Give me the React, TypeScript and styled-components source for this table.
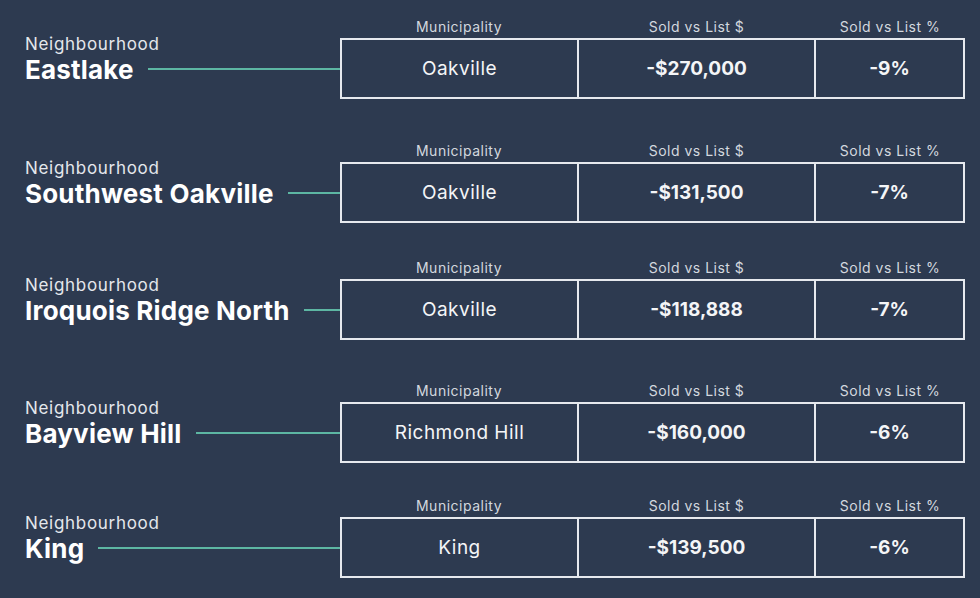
import React from "react";
import styled, { createGlobalStyle } from "styled-components";

const GlobalStyle = createGlobalStyle`
  html, body {
    margin: 0;
    padding: 0;
    background: #2d3a50;
  }
  body {
    font-family: Inter, "Open Sans", sans-serif;
    color: #ffffff;
  }
`;

// page wrapper, fixed to the screenshot size
const Page = styled.div`
  width: 980px;
  height: 598px;
  box-sizing: border-box;
  padding: 0 15px 0 25px;
  display: flex;
  flex-direction: column;
  background: #2d3a50;
  overflow: hidden;
`;

const Row = styled.div<{ $top: number }>`
  display: flex;
  align-items: flex-end;
  margin-top: ${(p) => p.$top}px;
`;

const LabelBlock = styled.div`
  flex: 1;
  display: flex;
  flex-direction: column;
  padding-bottom: 15px;
`;

const Kicker = styled.div`
  font-size: 17px;
  line-height: 20px;
  letter-spacing: 0.7px;
  color: #e4e7ec;
  font-weight: 400;
`;

const NameRow = styled.div`
  display: flex;
  align-items: center;
  height: 30px;
`;

const Name = styled.div`
  font-size: 26px;
  font-weight: 700;
  letter-spacing: 0.2px;
  color: #ffffff;
  white-space: nowrap;
`;

const Connector = styled.div`
  flex: 1;
  height: 2px;
  margin-left: 14px;
  background: #5db6a3;
`;

const TableBlock = styled.div`
  width: 625px;
  display: flex;
  flex-direction: column;
`;

const HeaderRow = styled.div`
  display: grid;
  grid-template-columns: 238px 237px 1fr;
  height: 24px;
  align-items: center;
  text-align: center;
  font-size: 14px;
  letter-spacing: 0.5px;
  color: #d3d8df;
`;

const Table = styled.div`
  display: grid;
  grid-template-columns: 235px 237px 1fr;
  height: 61px;
  box-sizing: border-box;
  border: 2px solid #e6e9ee;
`;

const Cell = styled.div<{ $bold?: boolean; $divider?: boolean }>`
  display: flex;
  align-items: center;
  justify-content: center;
  font-size: 19px;
  font-weight: ${(p) => (p.$bold ? 700 : 400)};
  letter-spacing: ${(p) => (p.$bold ? "0" : "0.5px")};
  color: #f4f5f7;
  border-left: ${(p) => (p.$divider ? "2px solid #e6e9ee" : "none")};
`;

interface Item {
  name: string;
  municipality: string;
  dollars: string;
  percent: string;
  top: number;
}

const items: Item[] = [
  { name: "Eastlake", municipality: "Oakville", dollars: "-$270,000", percent: "-9%", top: 14 },
  { name: "Southwest Oakville", municipality: "Oakville", dollars: "-$131,500", percent: "-7%", top: 39 },
  { name: "Iroquois Ridge North", municipality: "Oakville", dollars: "-$118,888", percent: "-7%", top: 32 },
  { name: "Bayview Hill", municipality: "Richmond Hill", dollars: "-$160,000", percent: "-6%", top: 38 },
  { name: "King", municipality: "King", dollars: "-$139,500", percent: "-6%", top: 30 },
];

const App: React.FC = () => {
  return (
    <>
      <GlobalStyle />
      <Page>
        {items.map((item) => (
          <Row key={item.name} $top={item.top}>
            <LabelBlock>
              <Kicker>Neighbourhood</Kicker>
              <NameRow>
                <Name>{item.name}</Name>
                <Connector />
              </NameRow>
            </LabelBlock>
            <TableBlock>
              <HeaderRow>
                <span>Municipality</span>
                <span>Sold vs List $</span>
                <span>Sold vs List %</span>
              </HeaderRow>
              <Table>
                <Cell>{item.municipality}</Cell>
                <Cell $bold $divider>
                  {item.dollars}
                </Cell>
                <Cell $bold $divider>
                  {item.percent}
                </Cell>
              </Table>
            </TableBlock>
          </Row>
        ))}
      </Page>
    </>
  );
};

export default App;
